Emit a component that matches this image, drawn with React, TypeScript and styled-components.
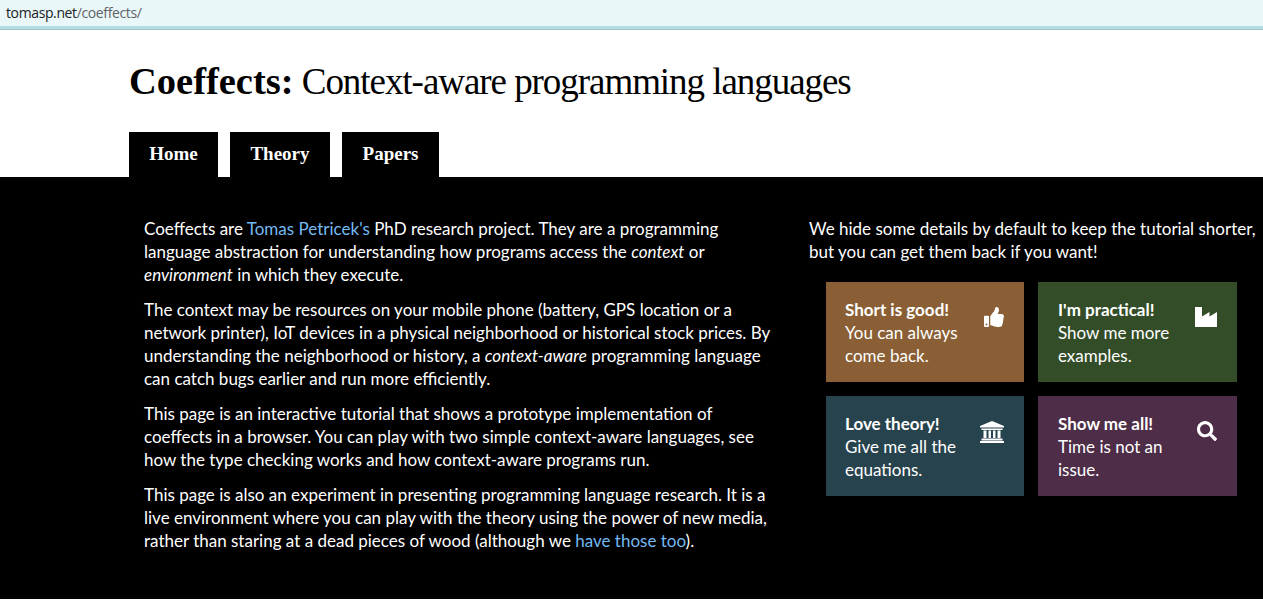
import React from "react";
import styled, { createGlobalStyle } from "styled-components";
import { FaThumbsUp, FaSearch } from "react-icons/fa";

const GlobalStyle = createGlobalStyle`
  html, body {
    margin: 0;
    padding: 0;
    background: #fff;
    overflow: hidden;
  }
`;

const AddressBar = styled.div`
  height: 26px;
  padding-left: 6px;
  background: #e9f7f8;
  border-bottom: 3px solid #b6dde3;
  box-shadow: 0 1px 0 #9cc4ca;
  font: 14px/26px "Open Sans", sans-serif;
  letter-spacing: -0.38px;
  color: #5f6368;
`;

const Host = styled.span`
  color: #202124;
`;

const Header = styled.header`
  padding: 28px 0 0 129px;
  margin-top: 1px;
`;

const Title = styled.h1`
  margin: 0;
  height: 74px;
  font: 400 37px/46px "Liberation Serif", serif;
  letter-spacing: -1.05px;
  color: #000;
  white-space: nowrap;
`;

const TitleLead = styled.b`
  font-size: 38.5px;
  font-weight: 700;
  letter-spacing: 0;
`;

const Tabs = styled.nav`
  display: flex;
  gap: 12px;
`;

const Tab = styled.a<{ $width: number }>`
  width: ${({ $width }) => $width}px;
  height: 45px;
  background: #000;
  color: #fff;
  text-align: center;
  font: 700 19px/43px "Liberation Serif", serif;
`;

const Main = styled.main`
  display: flex;
  height: 422px;
  box-sizing: border-box;
  padding: 40px 0 0 144px;
  background: #000;
  color: #fff;
  font: 17px/23px Lato, sans-serif;
`;

const Intro = styled.section`
  width: 665px;
  flex: none;
`;

const Para = styled.p`
  margin: 0 0 12px;
  white-space: nowrap;
`;

const Link = styled.a`
  color: #74baf0;
`;

const Side = styled.section`
  flex: 1;
`;

const Cards = styled.div`
  display: grid;
  grid-template-columns: 198px 199px;
  grid-auto-rows: 100px;
  gap: 14px;
  margin: 19px 0 0 17px;
`;

const Card = styled.div<{ $color: string }>`
  display: flex;
  justify-content: space-between;
  padding: 16px 20px 0 19px;
  box-sizing: border-box;
  background: ${({ $color }) => $color};
  &:nth-child(even) {
    padding-left: 20px;
  }
`;

const CardTitle = styled.strong`
  display: block;
  font-weight: 700;
`;

const CardIcon = styled.div`
  flex: none;
  padding-top: 9px;
  font-size: 20px;
  line-height: 0;
`;

const FactoryIcon = () => (
  <svg width="22" height="20" viewBox="0 0 22 20" fill="#fff">
    <path d="M0 0H7V9.5L14.5 5V9.5L22 5V20H0Z" />
  </svg>
);

const BankIcon = () => (
  <svg width="24" height="22" viewBox="0 0 24 22" fill="#fff">
    <path d="M12 0L24 5V6.5H0V5Z" />
    <path d="M1.5 7.5H22.5V9H1.5Z" />
    <path d="M3.5 9.5H6.5V17H3.5ZM8.5 9.5H11V17H8.5ZM13 9.5H15.5V17H13ZM17.5 9.5H20.5V17H17.5Z" />
    <path d="M1.5 17.5H22.5V19.5H1.5Z" />
    <path d="M0 20H24V22H0Z" />
  </svg>
);

const cards = [
  { title: "Short is good!", lines: ["You can always", "come back."], color: "#8a5f35", icon: <FaThumbsUp /> },
  { title: "I'm practical!", lines: ["Show me more", "examples."], color: "#334d29", icon: <FactoryIcon /> },
  { title: "Love theory!", lines: ["Give me all the", "equations."], color: "#27434d", icon: <BankIcon /> },
  { title: "Show me all!", lines: ["Time is not an", "issue."], color: "#4d2d47", icon: <FaSearch /> },
];

export default function App() {
  return (
    <>
      <GlobalStyle />
      <AddressBar>
        <Host>tomasp.net</Host>/coeffects/
      </AddressBar>
      <Header>
        <Title>
          <TitleLead>Coeffects:</TitleLead> Context-aware programming languages
        </Title>
        <Tabs>
          <Tab $width={89}>Home</Tab>
          <Tab $width={100}>Theory</Tab>
          <Tab $width={97}>Papers</Tab>
        </Tabs>
      </Header>
      <Main>
        <Intro>
          <Para>
            Coeffects are <Link>Tomas Petricek's</Link> PhD research project. They are a programming
            <br />
            language abstraction for understanding how programs access the <em>context</em> or
            <br />
            <em>environment</em> in which they execute.
          </Para>
          <Para>
            The context may be resources on your mobile phone (battery, GPS location or a
            <br />
            network printer), IoT devices in a physical neighborhood or historical stock prices. By
            <br />
            understanding the neighborhood or history, a <em>context-aware</em> programming language
            <br />
            can catch bugs earlier and run more efficiently.
          </Para>
          <Para>
            This page is an interactive tutorial that shows a prototype implementation of
            <br />
            coeffects in a browser. You can play with two simple context-aware languages, see
            <br />
            how the type checking works and how context-aware programs run.
          </Para>
          <Para>
            This page is also an experiment in presenting programming language research. It is a
            <br />
            live environment where you can play with the theory using the power of new media,
            <br />
            rather than staring at a dead pieces of wood (although we <Link>have those too</Link>).
          </Para>
        </Intro>
        <Side>
          <Para>
            We hide some details by default to keep the tutorial shorter,
            <br />
            but you can get them back if you want!
          </Para>
          <Cards>
            {cards.map((card) => (
              <Card key={card.title} $color={card.color}>
                <div>
                  <CardTitle>{card.title}</CardTitle>
                  {card.lines[0]}
                  <br />
                  {card.lines[1]}
                </div>
                <CardIcon>{card.icon}</CardIcon>
              </Card>
            ))}
          </Cards>
        </Side>
      </Main>
    </>
  );
}
